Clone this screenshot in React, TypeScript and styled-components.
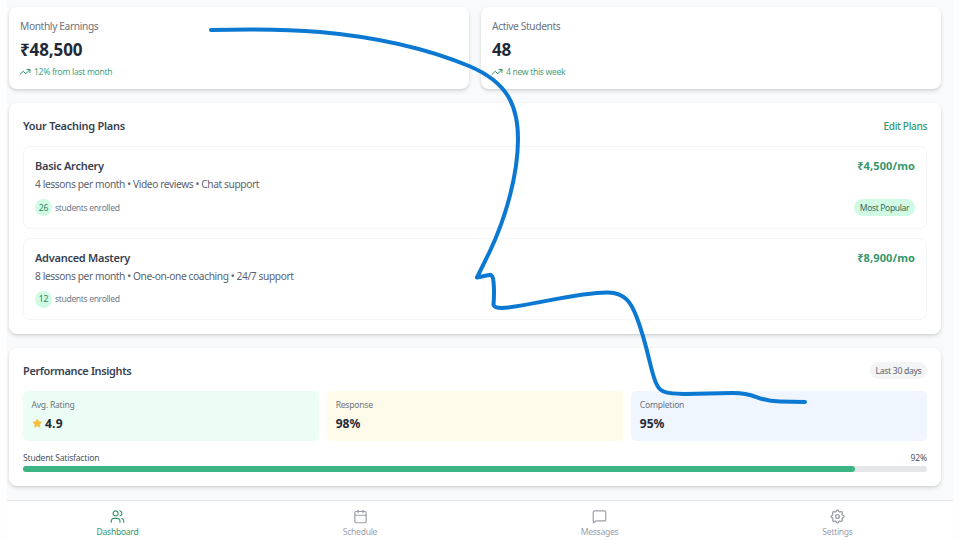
import React from "react";
import styled, { createGlobalStyle } from "styled-components";
import { Calendar, MessageSquare, Star, TrendingUp, Users } from "lucide-react";

const GlobalStyle = createGlobalStyle`
  * { box-sizing: border-box; }
  body {
    margin: 0;
    background: #fefefe;
    font-family: "Noto Sans", "Open Sans", sans-serif;
    overflow: hidden;
  }
`;

const Page = styled.div`
  position: relative;
  display: flex;
  flex-direction: column;
  width: 960px;
  height: 540px;
  padding: 0 7px;
  overflow: hidden;
`;

const Content = styled.main`
  display: flex;
  flex-direction: column;
  gap: 14px;
  height: 500px;
  padding: 7px 12px 0 2px;
  background: #f9fafb;
`;

const Card = styled.section`
  background: #fff;
  border-radius: 8px;
  box-shadow: 0 2px 4px rgba(0, 0, 0, 0.13), 0 1px 2px rgba(0, 0, 0, 0.06);
`;

const StatRow = styled.div`
  display: grid;
  grid-template-columns: 460px 460px;
  gap: 12px;
`;

const StatCard = styled(Card)`
  display: flex;
  flex-direction: column;
  height: 82px;
  padding: 12px 11px;
`;

const Text = styled.span<{ $size: number; $line: number; $color: string; $weight?: number; $track?: number }>`
  font-size: ${(p) => p.$size}px;
  line-height: ${(p) => p.$line}px;
  color: ${(p) => p.$color};
  font-weight: ${(p) => p.$weight ?? 400};
  letter-spacing: ${(p) => p.$track ?? 0}px;
  white-space: nowrap;
`;

const StatValue = styled.div`
  height: 26px;
  margin-top: 3px;
`;

const Trend = styled.div`
  display: flex;
  align-items: center;
  gap: 3px;
  height: 12px;
  margin: 3px 0 0 -1px;
  color: #2f9367;
`;

const PlansCard = styled(Card)`
  height: 231px;
  padding: 14px;
`;

const InsightsCard = styled(Card)`
  height: 138px;
  padding: 14px;
`;

const Header = styled.div<{ $height: number; $gap: number }>`
  display: flex;
  align-items: center;
  justify-content: space-between;
  height: ${(p) => p.$height}px;
  margin-bottom: ${(p) => p.$gap}px;
`;

const PlanList = styled.div`
  display: flex;
  flex-direction: column;
  gap: 9px;
`;

const Plan = styled.article`
  display: flex;
  flex-direction: column;
  height: 82.5px;
  padding: 10px 11px;
  border: 1px solid #f4f5f6;
  border-radius: 7px;
`;

const PlanLine = styled.div<{ $height: number; $top?: number }>`
  display: flex;
  align-items: center;
  justify-content: space-between;
  height: ${(p) => p.$height}px;
  margin-top: ${(p) => p.$top ?? 0}px;
`;

const Enrolled = styled.div`
  display: flex;
  align-items: center;
  gap: 3px;
`;

const Count = styled.span`
  display: grid;
  place-items: center;
  width: 17px;
  height: 17px;
  border-radius: 50%;
  background: #d1fae5;
`;

const Pill = styled.span<{ $bg: string; $width: number }>`
  display: grid;
  place-items: center;
  width: ${(p) => p.$width}px;
  height: 17px;
  border-radius: 9px;
  background: ${(p) => p.$bg};
`;

const Metrics = styled.div`
  display: grid;
  grid-template-columns: repeat(3, 1fr);
  gap: 8.5px;
  margin-bottom: 11px;
`;

const Metric = styled.div<{ $bg: string }>`
  display: flex;
  flex-direction: column;
  height: 50.5px;
  padding: 8px 8.5px;
  border-radius: 5px;
  background: ${(p) => p.$bg};
`;

const MetricValue = styled.div`
  display: flex;
  align-items: center;
  gap: 3px;
  margin-top: 4px;
`;

const Track = styled.div`
  height: 6px;
  border-radius: 3px;
  background: #e5e6e7;
`;

const Fill = styled.div`
  height: 100%;
  border-radius: 3px;
  background: #3cb483;
`;

const Nav = styled.nav`
  display: grid;
  grid-template-columns: 221px 264px 215px 261px;
  height: 40px;
  border-top: 1px solid #e5e7eb;
  background: #fff;
`;

const NavItem = styled.div<{ $active?: boolean }>`
  display: flex;
  flex-direction: column;
  align-items: center;
  gap: 2px;
  padding-top: 8px;
  color: ${(p) => (p.$active ? "#36976c" : "#9ca0aa")};
`;

const Scribble = styled.svg`
  position: absolute;
  inset: 0;
  pointer-events: none;
`;

type IconProps = { size?: number | string; strokeWidth?: number | string };

const Gear = ({ size = 15, strokeWidth = 1.9 }: IconProps) => (
  <svg
    width={size}
    height={size}
    viewBox="1.5 1.5 21 21"
    fill="none"
    stroke="currentColor"
    strokeWidth={strokeWidth}
    strokeLinecap="round"
    strokeLinejoin="round"
  >
    <path d="M10.325 4.317c.426-1.756 2.924-1.756 3.35 0a1.724 1.724 0 0 0 2.573 1.066c1.543-.94 3.31.826 2.37 2.37a1.724 1.724 0 0 0 1.065 2.572c1.756.426 1.756 2.924 0 3.35a1.724 1.724 0 0 0-1.066 2.573c.94 1.543-.826 3.31-2.37 2.37a1.724 1.724 0 0 0-2.572 1.065c-.426 1.756-2.924 1.756-3.35 0a1.724 1.724 0 0 0-2.573-1.066c-1.543.94-3.31-.826-2.37-2.37a1.724 1.724 0 0 0-1.065-2.572c-1.756-.426-1.756-2.924 0-3.35a1.724 1.724 0 0 0 1.066-2.573c-.94-1.543.826-3.31 2.37-2.37 1 .608 2.296.07 2.572-1.065z" />
    <circle cx="12" cy="12" r="2.6" />
  </svg>
);

const stats = [
  { label: "Monthly Earnings", value: "₹48,500", trend: "12% from last month" },
  { label: "Active Students", value: "48", trend: "4 new this week" },
];

const plans = [
  { name: "Basic Archery", price: "₹4,500/mo", detail: "4 lessons per month • Video reviews • Chat support", count: 26, popular: true },
  { name: "Advanced Mastery", price: "₹8,900/mo", detail: "8 lessons per month • One-on-one coaching • 24/7 support", count: 12, popular: false },
];

const metrics = [
  { label: "Avg. Rating", value: "4.9", bg: "#ecfdf5", star: true },
  { label: "Response", value: "98%", bg: "#fffbeb", star: false },
  { label: "Completion", value: "95%", bg: "#eff6ff", star: false },
];

const navItems = [
  { label: "Dashboard", Icon: Users, active: true },
  { label: "Schedule", Icon: Calendar, active: false },
  { label: "Messages", Icon: MessageSquare, active: false },
  { label: "Settings", Icon: Gear, active: false },
];

const satisfaction = 92;

export default function App() {
  return (
    <>
      <GlobalStyle />
      <Page>
        <Content>
          <StatRow>
            {stats.map((s) => (
              <StatCard key={s.label}>
                <Text $size={10.2} $line={15} $color="#6b7280" $track={-0.36}>{s.label}</Text>
                <StatValue>
                  <Text $size={17} $line={26} $color="#1f2937" $weight={700} $track={-0.1}>{s.value}</Text>
                </StatValue>
                <Trend>
                  <TrendingUp size={12} />
                  <Text $size={8.6} $line={12} $color="#4d9f7b" $track={-0.33}>{s.trend}</Text>
                </Trend>
              </StatCard>
            ))}
          </StatRow>

          <PlansCard>
            <Header $height={18} $gap={11}>
              <Text $size={11} $line={18} $color="#374151" $weight={600} $track={-0.27}>Your Teaching Plans</Text>
              <Text $size={10.1} $line={16} $color="#36976c" $weight={500} $track={-0.35}>Edit Plans</Text>
            </Header>
            <PlanList>
              {plans.map((p) => (
                <Plan key={p.name}>
                  <PlanLine $height={17}>
                    <Text $size={11} $line={17} $color="#374151" $weight={600} $track={-0.27}>{p.name}</Text>
                    <Text $size={11} $line={17} $color="#36976c" $weight={700} $track={0.12}>{p.price}</Text>
                  </PlanLine>
                  <PlanLine $height={16} $top={2}>
                    <Text $size={10.2} $line={16} $color="#5b626d" $track={-0.39}>{p.detail}</Text>
                  </PlanLine>
                  <PlanLine $height={17} $top={7}>
                    <Enrolled>
                      <Count>
                        <Text $size={8.6} $line={12} $color="#2f855f" $track={-0.1}>{p.count}</Text>
                      </Count>
                      <Text $size={8.6} $line={12} $color="#747a85" $track={-0.36}>students enrolled</Text>
                    </Enrolled>
                    {p.popular && (
                      <Pill $bg="#d1fae5" $width={61}>
                        <Text $size={8.6} $line={12} $color="#3b6d59" $track={-0.38}>Most Popular</Text>
                      </Pill>
                    )}
                  </PlanLine>
                </Plan>
              ))}
            </PlanList>
          </PlansCard>

          <InsightsCard>
            <Header $height={17} $gap={11.5}>
              <Text $size={11} $line={17} $color="#374151" $weight={600} $track={-0.38}>Performance Insights</Text>
              <Pill $bg="#f3f4f6" $width={57}>
                <Text $size={8.6} $line={12} $color="#5b626d" $track={-0.3}>Last 30 days</Text>
              </Pill>
            </Header>
            <Metrics>
              {metrics.map((m) => (
                <Metric key={m.label} $bg={m.bg}>
                  <Text $size={8.6} $line={12} $color="#6b7280" $track={-0.25}>{m.label}</Text>
                  <MetricValue>
                    {m.star && <Star size={10.5} color="#f5bf3c" fill="#f5bf3c" strokeWidth={1} />}
                    <Text $size={12} $line={17} $color="#1f2937" $weight={700} $track={m.star ? 0.2 : 0}>{m.value}</Text>
                  </MetricValue>
                </Metric>
              ))}
            </Metrics>
            <Header $height={12} $gap={2}>
              <Text $size={8.6} $line={12} $color="#4b5563" $track={-0.22}>Student Satisfaction</Text>
              <Text $size={8.6} $line={12} $color="#4b5563" $track={-0.2}>{satisfaction}%</Text>
            </Header>
            <Track>
              <Fill style={{ width: `${satisfaction}%` }} />
            </Track>
          </InsightsCard>
        </Content>

        <Nav>
          {navItems.map(({ label, Icon, active }) => (
            <NavItem key={label} $active={active}>
              <Icon size={15} strokeWidth={1.9} />
              <Text $size={8.6} $line={13} $color="inherit" $track={-0.3}>{label}</Text>
            </NavItem>
          ))}
        </Nav>

        <Scribble width="960" height="540" viewBox="0 0 960 540" fill="none">
          <path
            d="M211 30 C248 29 284 29 320 32 C376 37 428 49 469 66 C507 82 518 105 518 139 C518 174 506 217 490 251 L477 277.500 L489 275 Q493 274 493.500 282 Q494.500 291 493.500 305 Q495 309 508 307.500 C541 303 582 292 608 292.500 C625 293 631 302 637 318 C649 350 651 375 657 385 C661 394 671 393.500 686 394 L732 393 C757 392.500 755 401 780 401.500 L805 402"
            stroke="#0b78d1"
            strokeWidth="4"
            strokeLinecap="round"
            strokeLinejoin="round"
          />
        </Scribble>
      </Page>
    </>
  );
}
